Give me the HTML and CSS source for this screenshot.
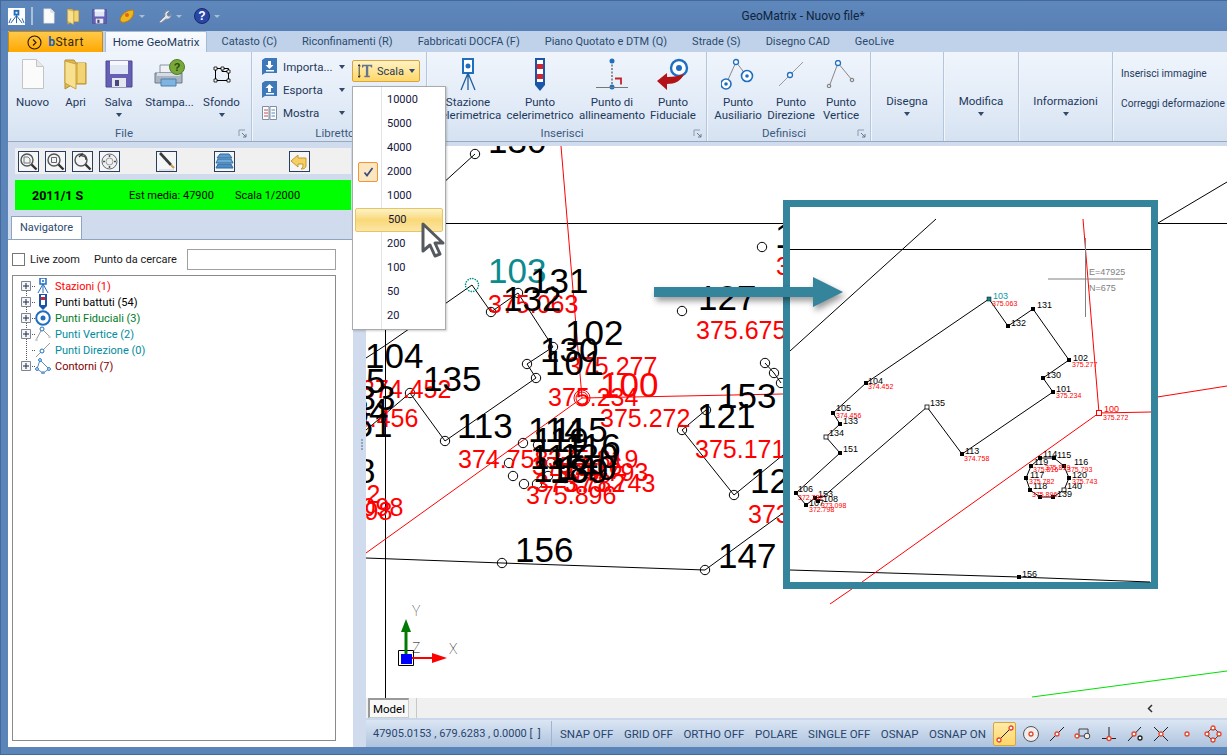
FILE: index.html
```html
<!DOCTYPE html>
<html>
<head>
<meta charset="UTF-8">
<title>GeoMatrix - Nuovo file*</title>
<link rel="stylesheet" href="styles.css">
</head>
<body>

<!-- shared icons -->
<svg class="defs" width="0" height="0">
  <symbol id="i-doc" viewBox="0 0 24 32">
    <path d="M1.5 1.5h14l7 7v22h-21z" fill="#fbfbfb" stroke="#c4c4c4"/>
    <path d="M15.5 1.5v7h7" fill="#e8e8e8" stroke="#c4c4c4"/>
  </symbol>
  <symbol id="i-folder" viewBox="0 0 24 32">
    <path d="M1 2h9l2 3h10v21H9l-8 5z" fill="#e2b94f" stroke="#b58d2e"/>
    <path d="M1 3l11 3v25l-11-6z" fill="#f7e08f" stroke="#c9a23c"/>
    <path d="M14 5h7v20h-7z" fill="#f3d474"/>
  </symbol>
  <symbol id="i-floppy" viewBox="0 0 28 28">
    <path d="M1 1h26v26H1z" fill="#6560b4" stroke="#4a4690"/>
    <path d="M5 1h18v13H5z" fill="#dfe6f6"/>
    <path d="M5 1h18v4H5z" fill="#f6f8fd"/>
    <path d="M7 18h14v9H7z" fill="#e6e6ee"/>
    <path d="M10 20h4v6h-4z" fill="#4a4a78"/>
  </symbol>
  <symbol id="i-plus" viewBox="0 0 10 10">
    <path d="M.5.5h9v9h-9z" fill="#f4f6fa" stroke="#7d8590"/>
    <path d="M2 5h6M5 2v6" stroke="#1d2a45"/>
  </symbol>
  <symbol id="i-launch" viewBox="0 0 9 9">
    <path d="M1 1h6M1 1v6" stroke="#8a9bb0" fill="none"/>
    <path d="M4 4l4 4M8 5v3H5" stroke="#66788e" fill="none"/>
  </symbol>
  <symbol id="i-mag" viewBox="0 0 19 19">
    <circle cx="8" cy="8" r="6" fill="#f2f4f6" stroke="#555" stroke-width="1.4"/>
    <path d="M12.5 12.5l5 5" stroke="#333" stroke-width="2.4"/>
  </symbol>
</svg>

<div class="app">

  <header class="titlebar">
    <div class="qat">
      <svg width="17" height="17" viewBox="0 0 18 18">
        <path d="M0 0h18v18H0z" fill="#fff"/>
        <path d="M6 2h6v6H6z" fill="#1f6fc0"/>
        <path d="M8 4h2v2H8z" fill="#fff"/>
        <path d="M9 8L3 16M9 8v8M9 8l6 8M3 11l-2 5M15 11l2 5" stroke="#1f5fa8" fill="none"/>
      </svg>
      <span class="q-sep"></span>
      <svg width="12" height="16"><use href="#i-doc"/></svg>
      <svg width="13" height="17"><use href="#i-folder"/></svg>
      <svg width="15" height="15"><use href="#i-floppy"/></svg>
      <svg width="16" height="15" viewBox="0 0 16 15">
        <path d="M1 11C2 5 8 1 14 1c2 3-1 9-5 11-4 2-7 2-8-1z" fill="#f0b61e" stroke="#b57f0c"/>
        <circle cx="8" cy="6" r="2" fill="#e0661a"/>
      </svg>
      <span class="q-arrow"></span>
      <svg width="15" height="15" viewBox="0 0 15 15">
        <path d="M2 13L8 7c-1-3 1-6 5-5l-3 3 1 2 2 0 1-2c1 3-2 6-5 5l-5 4z" fill="#dfe5ee" stroke="#7d8794"/>
      </svg>
      <span class="q-arrow"></span>
      <svg width="16" height="16" viewBox="0 0 16 16">
        <circle cx="8" cy="8" r="7.500" fill="#2a47a8" stroke="#18296b"/>
        <text x="8" y="12" class="q-help">?</text>
      </svg>
      <span class="q-arrow"></span>
    </div>
    <div class="title">GeoMatrix - Nuovo file*</div>
  </header>

  <nav class="tabs">
    <div class="bstart">
      <svg width="15" height="15" viewBox="0 0 15 15">
        <circle cx="7.500" cy="7.500" r="6.500" fill="none" stroke="#2a1a00" stroke-width="1.100"/>
        <path d="M6 4.500l3 3-3 3" fill="none" stroke="#2a1a00" stroke-width="1.100"/>
      </svg>
      <span><b class="bstart-b">b</b>Start</span>
    </div>
    <div class="tab active">Home GeoMatrix</div>
    <div class="tab first">Catasto (C)</div>
    <div class="tab">Riconfinamenti (R)</div>
    <div class="tab">Fabbricati DOCFA (F)</div>
    <div class="tab">Piano Quotato e DTM (Q)</div>
    <div class="tab">Strade (S)</div>
    <div class="tab">Disegno CAD</div>
    <div class="tab">GeoLive</div>
  </nav>

  <section class="ribbon">

    <div class="group g-file">
      <div class="group-body cols">
        <div class="big"><div class="big-ico"><svg width="24" height="32"><use href="#i-doc"/></svg></div><span>Nuovo</span></div>
        <div class="big"><div class="big-ico"><svg width="24" height="32"><use href="#i-folder"/></svg></div><span>Apri</span></div>
        <div class="big"><div class="big-ico"><svg width="28" height="28"><use href="#i-floppy"/></svg></div><span>Salva</span><i class="caret"></i></div>
        <div class="big"><div class="big-ico">
          <svg width="31" height="30" viewBox="0 0 31 30">
            <path d="M6 6h17v8H6z" fill="#eef1f5" stroke="#8b96a3"/>
            <path d="M1 14h27v10H1z" fill="#a9b5c2" stroke="#6d7a88"/>
            <path d="M3 14h23v3H3z" fill="#d5dce4"/>
            <path d="M7 20h15v7H7z" fill="#7fb4e0" stroke="#4f7ea8"/>
            <circle cx="23" cy="8" r="7.500" fill="#79a83a" stroke="#557a22"/>
            <text x="23" y="12" class="p-help">?</text>
          </svg></div><span>Stampa...</span></div>
        <div class="big"><div class="big-ico">
          <svg width="18" height="17" viewBox="0 0 18 17">
            <path d="M2.500 2.500h13v12h-13z" fill="none" stroke="#000"/>
            <path d="M9 2.500v3h6.500" fill="none" stroke="#000"/>
            <path d="M1 1h3v3H1zM8 1h3v3H8zM14 4h3v3h-3zM14 13h3v3h-3zM1 13h3v3H1z" fill="#fff" stroke="#000" stroke-width=".8"/>
          </svg></div><span>Sfondo</span><i class="caret"></i></div>
      </div>
      <div class="group-label"><span>File</span><svg width="9" height="9"><use href="#i-launch"/></svg></div>
    </div>

    <div class="group g-lib">
      <div class="group-body lib-body">
        <div class="small-col">
          <div class="small">
            <svg width="15" height="17" viewBox="0 0 15 17"><path d="M0 2l3-2h12v15H3l-3 2z" fill="#3d78b8"/><path d="M6 3h3v4h2.500l-4 4-4-4H6z" fill="#fff"/><path d="M4 12h8v1.500H4z" fill="#fff"/></svg>
            <span>Importa...</span><i class="caret"></i>
          </div>
          <div class="small">
            <svg width="15" height="17" viewBox="0 0 15 17"><path d="M0 2l3-2h12v15H3l-3 2z" fill="#3d78b8"/><path d="M6 11h3V7h2.500l-4-4-4 4H6z" fill="#fff"/><path d="M4 12h8v1.500H4z" fill="#fff"/></svg>
            <span>Esporta</span><i class="caret"></i>
          </div>
          <div class="small">
            <svg width="15" height="14" viewBox="0 0 15 14"><path d="M.5.500h6.500v13H.5zM8 .500h6.500v13H8z" fill="#fdfdfd" stroke="#7f8ea3"/><path d="M2 4h4M2 7h4M2 10h4" stroke="#c0504d"/><path d="M9.500 4h3.500M9.500 7h3.500M9.500 10h3.500" stroke="#5b87bd"/></svg>
            <span>Mostra</span><i class="caret"></i>
          </div>
        </div>
        <div class="scala">
          <svg width="15" height="16" viewBox="0 0 19 18">
            <path d="M1.500 1v16M0 3l1.500-2L3 3M0 15l1.500 2L3 15" stroke="#111" fill="none"/>
            <path d="M5 1h13v4h-1c0-1-1-2-2-2h-2v12h2v2H8v-2h2V3H8C7 3 6 4 6 5H5z" fill="#65758b"/>
          </svg>
          <span>Scala</span><i class="caret"></i>
        </div>
      </div>
      <div class="group-label"><span>Libretto</span><svg width="9" height="9"><use href="#i-launch"/></svg></div>
    </div>

    <div class="group g-ins">
      <div class="group-body cols">
        <div class="big"><div class="big-ico">
          <svg width="20" height="33" viewBox="0 0 20 33">
            <path d="M5 1h10v14H5z" fill="#fff" stroke="#1f6fc0" stroke-width="2"/>
            <circle cx="10" cy="8" r="2.500" fill="#1f6fc0"/>
            <path d="M10 15L3 32M10 15v17M10 15l7 17" stroke="#1f5f9f" stroke-width="1.300" fill="none"/>
          </svg></div><span>Stazione<br>celerimetrica</span></div>
        <div class="big"><div class="big-ico">
          <svg width="12" height="33" viewBox="0 0 12 33">
            <path d="M1 0h10v27l-5 6-5-6z" fill="#1b55a8"/>
            <path d="M3 2h6v22H3z" fill="#fff"/>
            <path d="M3 6h6v5H3zM3 16h6v5H3z" fill="#d8232a"/>
          </svg></div><span>Punto<br>celerimetrico</span></div>
        <div class="big"><div class="big-ico">
          <svg width="34" height="33" viewBox="0 0 34 33">
            <path d="M17 3v26" stroke="#333" stroke-dasharray="2 1.500"/>
            <circle cx="17" cy="3" r="2.500" fill="#1f6fc0"/>
            <circle cx="17" cy="29" r="2.500" fill="#1f6fc0"/>
            <path d="M1 29.500h32" stroke="#777"/>
            <path d="M20 20.500h6v6" fill="none" stroke="#c8202a" stroke-width="1.800"/>
          </svg></div><span>Punto di<br>allineamento</span></div>
        <div class="big"><div class="big-ico">
          <svg width="34" height="33" viewBox="0 0 34 33">
            <circle cx="23" cy="10" r="8" fill="#fff" stroke="#1f6fc0" stroke-width="2.400"/>
            <circle cx="23" cy="10" r="3" fill="#1f6fc0"/>
            <path d="M1 23l10-8v4c7 0 12-1 17-3-3 7-9 10-17 10v6z" fill="#b31217"/>
          </svg></div><span>Punto<br>Fiduciale</span></div>
      </div>
      <div class="group-label"><span>Inserisci</span><svg width="9" height="9"><use href="#i-launch"/></svg></div>
    </div>

    <div class="group g-def">
      <div class="group-body cols">
        <div class="big"><div class="big-ico">
          <svg width="34" height="32" viewBox="0 0 34 32">
            <path d="M6 24l9-20 10 13" fill="none" stroke="#888"/>
            <circle cx="15" cy="4" r="2.500" fill="#fff" stroke="#1f6fc0" stroke-width="1.300"/>
            <circle cx="26" cy="18" r="5.500" fill="#fff" stroke="#1f6fc0" stroke-width="1.600"/>
            <circle cx="26" cy="18" r="1.800" fill="#1f6fc0"/>
            <circle cx="5" cy="26" r="5" fill="#fff" stroke="#1f6fc0" stroke-width="1.600"/>
            <circle cx="5" cy="26" r="1.800" fill="#1f6fc0"/>
          </svg></div><span>Punto<br>Ausiliario</span></div>
        <div class="big"><div class="big-ico">
          <svg width="26" height="26" viewBox="0 0 26 26">
            <path d="M1 25L25 1" stroke="#999"/>
            <circle cx="12" cy="14" r="2.500" fill="#fff" stroke="#1f6fc0" stroke-width="1.300"/>
          </svg></div><span>Punto<br>Direzione</span></div>
        <div class="big"><div class="big-ico">
          <svg width="30" height="28" viewBox="0 0 30 28">
            <path d="M3 27L12 3l14 17" fill="none" stroke="#888"/>
            <circle cx="12" cy="3" r="2.500" fill="#fff" stroke="#1f6fc0" stroke-width="1.300"/>
            <circle cx="26" cy="20" r="1.800" fill="#ddd" stroke="#777"/>
            <circle cx="3" cy="26" r="1.800" fill="#ddd" stroke="#777"/>
          </svg></div><span>Punto<br>Vertice</span></div>
      </div>
      <div class="group-label"><span>Definisci</span><svg width="9" height="9"><use href="#i-launch"/></svg></div>
    </div>

    <div class="group g-dis"><div class="group-body"><div class="big wide"><span>Disegna</span><i class="caret"></i></div></div></div>
    <div class="group g-mod"><div class="group-body"><div class="big wide"><span>Modifica</span><i class="caret"></i></div></div></div>
    <div class="group g-inf"><div class="group-body"><div class="big wide"><span>Informazioni</span><i class="caret"></i></div></div></div>
    <div class="group g-img">
      <div class="img-row">Inserisci immagine</div>
      <div class="img-row">Correggi deformazione</div>
    </div>
  </section>

  <div class="work">
    <aside class="side">
      <div class="tools">
        <div class="tool"><svg width="19" height="19"><use href="#i-mag"/><path d="M5 5h4l2 2v4H5z" fill="none" stroke="#777"/></svg></div>
        <div class="tool"><svg width="19" height="19"><use href="#i-mag"/><path d="M5.500 5.500h5v5h-5z" fill="none" stroke="#666"/></svg></div>
        <div class="tool"><svg width="19" height="19"><use href="#i-mag"/><path d="M6 5l3-3v2c3 0 4 2 4 4" fill="none" stroke="#333" stroke-width="1.200"/></svg></div>
        <div class="tool"><svg width="19" height="19" viewBox="0 0 19 19"><circle cx="9.500" cy="9.500" r="7.500" fill="#eef0f3" stroke="#666"/><circle cx="9.500" cy="9.500" r="3.500" fill="none" stroke="#999"/><path d="M9.500 3v2M9.500 14v2M3 9.500h2M14 9.500h2" stroke="#555" stroke-width="1.500"/></svg></div>
        <div class="tool t-pen"><svg width="19" height="19" viewBox="0 0 19 19"><path d="M3 1l11 12" stroke="#3a3a3a" stroke-width="2.600"/><path d="M14 13l3 3" stroke="#c99a4a" stroke-width="2"/><path d="M2 18h15" stroke="#c9ccd0"/></svg></div>
        <div class="tool t-layer"><svg width="19" height="19" viewBox="0 0 19 19"><path d="M5 2h9l3 4H2z" fill="#5f9bd0" stroke="#2f6aa0"/><path d="M3 7h13l2 4H1z" fill="#6fa8da" stroke="#2f6aa0"/><path d="M3 12h13l2 4H1z" fill="#4f8cc4" stroke="#2f6aa0"/></svg></div>
        <div class="tool t-back"><svg width="19" height="19" viewBox="0 0 19 19"><path d="M1 9l7-6v3h8v8c0 2-2 3-5 3 2-1 2-3 2-5H8v3z" fill="#f5cf66" stroke="#c79a2a"/></svg></div>
      </div>

      <div class="status-green">
        <b class="g-id">2011/1 S</b>
        <span class="g-est">Est media: 47900</span>
        <span class="g-sc">Scala 1/2000</span>
      </div>

      <div class="nav-tabs"><div class="nav-tab">Navigatore</div></div>
      <div class="nav-panel">
        <div class="search-row">
          <span class="chk"></span>
          <span class="lz">Live zoom</span>
          <span class="pc">Punto da cercare</span>
          <input class="search" type="text">
        </div>
        <div class="tree">
          <div class="row r-red"><svg class="exp" width="10" height="10"><use href="#i-plus"/></svg><i class="dots"></i>
            <svg class="t-ico" width="16" height="16" viewBox="0 0 16 16"><path d="M5 0h6v6H5z" fill="#fff" stroke="#1f6fc0" stroke-width="1.500"/><circle cx="8" cy="3" r="1" fill="#1f6fc0"/><path d="M8 6l-5 9M8 6v9M8 6l5 9" stroke="#1f6fc0" fill="none"/></svg>
            <span>Stazioni (1)</span></div>
          <div class="row r-blk"><svg class="exp" width="10" height="10"><use href="#i-plus"/></svg><i class="dots"></i>
            <svg class="t-ico" width="16" height="16" viewBox="0 0 16 16"><path d="M4 0h8v12l-4 4-4-4z" fill="#1b55a8"/><path d="M6 1h4v10H6z" fill="#fff"/><path d="M6 3h4v3H6z" fill="#d8232a"/></svg>
            <span>Punti battuti (54)</span></div>
          <div class="row r-grn"><svg class="exp" width="10" height="10"><use href="#i-plus"/></svg><i class="dots"></i>
            <svg class="t-ico" width="16" height="16" viewBox="0 0 16 16"><circle cx="8" cy="8" r="6.800" fill="#fff" stroke="#1f6fc0" stroke-width="2"/><circle cx="8" cy="8" r="2.500" fill="#1f6fc0"/></svg>
            <span>Punti Fiduciali (3)</span></div>
          <div class="row r-teal"><svg class="exp" width="10" height="10"><use href="#i-plus"/></svg><i class="dots"></i>
            <svg class="t-ico" width="16" height="16" viewBox="0 0 16 16"><path d="M1 14L7 3l8 8" fill="none" stroke="#999"/><circle cx="7" cy="3" r="2" fill="#fff" stroke="#1f6fc0"/><circle cx="1.500" cy="14" r="1.300" fill="#ccc"/><circle cx="14.500" cy="11" r="1.300" fill="#ccc"/></svg>
            <span>Punti Vertice (2)</span></div>
          <div class="row r-teal"><span class="exp-blank"></span><i class="dots"></i>
            <svg class="t-ico" width="16" height="16" viewBox="0 0 16 16"><path d="M1 15L15 1" stroke="#999"/><circle cx="7" cy="9" r="2" fill="#fff" stroke="#1f6fc0"/></svg>
            <span>Punti Direzione (0)</span></div>
          <div class="row r-mar"><svg class="exp" width="10" height="10"><use href="#i-plus"/></svg><i class="dots"></i>
            <svg class="t-ico" width="16" height="16" viewBox="0 0 16 16"><path d="M2 11L5 2l9 9-6 4z" fill="none" stroke="#5b87bd"/><circle cx="5" cy="2" r="1.400" fill="#fff" stroke="#1f6fc0"/><circle cx="14" cy="11" r="1.400" fill="#fff" stroke="#1f6fc0"/><circle cx="2" cy="11" r="1.400" fill="#fff" stroke="#1f6fc0"/><circle cx="8" cy="15" r="1.200" fill="#fff" stroke="#1f6fc0"/></svg>
            <span>Contorni (7)</span></div>
        </div>
      </div>
    </aside>

    <div class="splitter"><i></i><i></i><i></i><i></i></div>

    <div class="right">
      <svg class="cad" width="861" height="552" viewBox="366 146 861 552">
        <!-- base drawing -->
        <g class="ln-k">
          <path d="M366 223.500H1227"/>
          <path d="M385.500 146V698"/>
          <path d="M475 154L385 236"/>
          <path d="M472 285L386 345 366 358"/>
          <path d="M472 285L491 312 518 293 553 347 527 364 536 378 445 441 410 393 366 430"/>
          <path d="M366 558L502 563 705 570 783 513"/>
          <path d="M682 430L706 410M682 430L734 495 783 455"/>
          <path d="M765 363L774 373 781 383"/>
          <path d="M1158 223L1227 182"/>
        </g>
        <g class="ln-r">
          <path d="M561 146L582 398"/>
          <path d="M582 398L366 553"/>
          <path d="M582 398L783 394"/>
          <path d="M1151 398L1227 386"/>
          <path d="M862 582L830 604"/>
        </g>
        <path class="ln-g" d="M1032 697L1227 671"/>
        <g class="pt">
          <circle cx="475" cy="154" r="4.700"/><circle cx="491" cy="312" r="4.700"/><circle cx="518" cy="293" r="4.700"/>
          <circle cx="553" cy="347" r="4.700"/><circle cx="527" cy="364" r="4.700"/><circle cx="536" cy="378" r="4.700"/>
          <circle cx="445" cy="441" r="4.700"/><circle cx="410" cy="393" r="4.700"/><circle cx="682" cy="311" r="4.700"/>
          <circle cx="762" cy="247" r="4.700"/><circle cx="765" cy="363" r="4.700"/><circle cx="774" cy="373" r="4.700"/>
          <circle cx="781" cy="383" r="4.700"/><circle cx="682" cy="430" r="4.700"/><circle cx="706" cy="410" r="4.700"/>
          <circle cx="734" cy="495" r="4.700"/><circle cx="502" cy="563" r="4.700"/><circle cx="705" cy="570" r="4.700"/>
          <circle cx="523" cy="443" r="4.700"/><circle cx="538" cy="445" r="4.700"/><circle cx="509" cy="463" r="4.700"/>
          <circle cx="513" cy="476" r="4.700"/><circle cx="524" cy="484" r="4.700"/><circle cx="537" cy="484" r="4.700"/>
          <circle cx="548" cy="476" r="4.700"/><circle cx="551" cy="463" r="4.700"/>
        </g>
        <circle class="pt-teal" cx="472" cy="285" r="6.500"/>
        <circle class="pt-red" cx="582" cy="398" r="8"/>
        <circle class="pt-red" cx="582" cy="398" r="6"/>

        <text class="lbl-teal" x="488" y="283">103</text>
        <g class="elev">
          <text x="488" y="313">375.063</text><text x="696" y="339">375.675</text><text x="567" y="375">375.277</text>
          <text x="548" y="406">375.234</text><text x="600" y="427">375.272</text><text x="361" y="398">374.452</text>
          <text x="328" y="427">374.456</text><text x="458" y="468">374.758</text><text x="695" y="458">375.171</text>
          <text x="526" y="504">375.896</text><text x="565" y="492">375.743</text><text x="558" y="481">375.793</text>
          <text x="548" y="468">375.819</text><text x="532" y="475">375.816</text><text x="535" y="492">375.782</text>
          <text x="313" y="516">373.098</text><text x="302" y="520">372.798</text><text x="290" y="503">372.732</text>
          <text x="748" y="523">373.120</text><text x="776" y="275">375.480</text>
        </g>
        <text class="elev-big" x="600" y="397">100</text>
        <g class="lbl">
          <text x="488" y="153">130</text>
          <text x="530" y="293">131</text><text x="503" y="311">132</text><text x="565" y="345">102</text>
          <text x="540" y="362">130</text><text x="545" y="375">101</text><text x="365" y="368">104</text>
          <text x="423" y="391">135</text><text x="327" y="393">105</text><text x="337" y="410">133</text>
          <text x="330" y="423">134</text><text x="334" y="437">151</text><text x="457" y="438">113</text>
          <text x="317" y="483">108</text>
          <text x="528" y="442">114</text><text x="552" y="442">115</text><text x="533" y="452">119</text>
          <text x="565" y="458">116</text><text x="530" y="469">117</text><text x="533" y="482">118</text>
          <text x="560" y="468">120</text><text x="558" y="480">140</text><text x="550" y="483">139</text>
          <text x="697" y="428">121</text><text x="718" y="408">153</text><text x="698" y="310">127</text>
          <text x="750" y="493">125</text><text x="515" y="562">156</text><text x="718" y="568">147</text>
          <text x="775" y="248">128</text>
        </g>

        <!-- UCS icon -->
        <path class="ln-k" d="M398.500 650.500h15v15h-15z"/>
        <rect x="401" y="654" width="11" height="10" fill="#0000ff"/>
        <path d="M406 654V630" stroke="#007a00" stroke-width="3"/>
        <path d="M401 632l5-13 5 13z" fill="#007a00"/>
        <path d="M412 658h26" stroke="#ff0000" stroke-width="2"/>
        <path d="M432 653l15 5-15 5z" fill="#ff0000"/>
        <text class="axis" x="412" y="616">Y</text>
        <text class="axis" x="412" y="653">Z</text>
        <text class="axis" x="449" y="654">X</text>

        <!-- zoomed inset -->
        <rect class="inset" x="786.500" y="203.500" width="368" height="382"/>
        <g class="ln-k">
          <path d="M790 249.500H1151" stroke-width="1.200"/>
          <path d="M936 219L790 351"/>
          <path d="M989 299L866 383 833 413 840 424 826 437 840 453 796 493 806 505 815 498 823 497 927 407 962 454 1053 392 1043 378 1069 360 1033 309 1008 326z"/>
          <path d="M1040 458H1054L1064 466 1069 478 1064 490 1053 497H1040L1030 490 1026 478 1031 466z"/>
          <path d="M790 570L1019 577 1150 582"/>
        </g>
        <g class="ln-r">
          <path d="M1083 219L1099 413 1151 412"/>
          <path d="M1099 413L862 582"/>
        </g>
        <path class="ln-grey" d="M1048 279H1123M1085.500 238V317"/>
        <text class="cross" x="1089" y="275">E=47925</text>
        <text class="cross" x="1089" y="291">N=675</text>
        <g class="dot">
          <rect x="864" y="381" width="4" height="4"/><rect x="831" y="411" width="4" height="4"/><rect x="838" y="422" width="4" height="4"/>
          <rect x="838" y="451" width="4" height="4"/><rect x="794" y="491" width="4" height="4"/><rect x="804" y="503" width="4" height="4"/>
          <rect x="813" y="496" width="4" height="4"/><rect x="816" y="499" width="4" height="4"/><rect x="960" y="452" width="4" height="4"/>
          <rect x="1051" y="390" width="4" height="4"/><rect x="1041" y="376" width="4" height="4"/><rect x="1067" y="358" width="4" height="4"/>
          <rect x="1031" y="307" width="4" height="4"/><rect x="1006" y="324" width="4" height="4"/><rect x="1017" y="575" width="4" height="4"/>
          <rect x="1038" y="456" width="4" height="4"/><rect x="1052" y="456" width="4" height="4"/><rect x="1062" y="464" width="4" height="4"/>
          <rect x="1067" y="476" width="4" height="4"/><rect x="1051" y="495" width="4" height="4"/><rect x="1038" y="495" width="4" height="4"/>
          <rect x="1028" y="488" width="4" height="4"/><rect x="1024" y="476" width="4" height="4"/><rect x="1029" y="464" width="4" height="4"/>
        </g>
        <rect class="dot-open" x="925" y="405" width="4" height="4"/>
        <rect class="dot-open" x="824" y="435" width="4" height="4"/>
        <rect class="dot-open" x="1062" y="488" width="4" height="4"/>
        <rect class="dot-teal" x="987" y="297" width="4" height="4"/>
        <rect class="dot-red" x="1096.500" y="410.500" width="5" height="5"/>
        <g class="in-lbl">
          <text x="1037" y="308">131</text><text x="1011" y="326">132</text><text x="1073" y="361">102</text>
          <text x="1046" y="378">130</text><text x="1056" y="392">101</text><text x="868" y="384">104</text>
          <text x="836" y="411">105</text><text x="843" y="424">133</text><text x="829" y="436">134</text>
          <text x="843" y="452">151</text><text x="930" y="406">135</text><text x="965" y="454">113</text>
          <text x="798" y="492">106</text><text x="818" y="497">153</text><text x="823" y="502">108</text>
          <text x="809" y="506">107</text><text x="1043" y="457">114</text><text x="1057" y="458">115</text>
          <text x="1034" y="465">119</text><text x="1074" y="465">116</text><text x="1030" y="478">117</text>
          <text x="1072" y="478">120</text><text x="1033" y="489">118</text><text x="1067" y="489">140</text>
          <text x="1057" y="497">139</text><text x="1022" y="577">156</text>
        </g>
        <text class="in-teal" x="993" y="299">103</text>
        <text class="in-red-lbl" x="1104" y="412">100</text>
        <g class="in-elev">
          <text x="992" y="306">375.063</text><text x="1072" y="367">375.277</text><text x="1056" y="398">375.234</text>
          <text x="868" y="389">374.452</text><text x="836" y="418">374.456</text><text x="964" y="461">374.758</text>
          <text x="1103" y="420">375.272</text><text x="798" y="500">372.732</text><text x="821" y="508">373.098</text>
          <text x="809" y="512">372.798</text><text x="1067" y="472">375.793</text><text x="1033" y="472">375.816</text>
          <text x="1072" y="484">375.743</text><text x="1029" y="484">375.782</text><text x="1032" y="497">375.896</text>
          <text x="1045" y="470">375.819</text>
        </g>
        <polygon class="arrow" points="654,287 813,287 813,277 843,292 813,307 813,297 654,297"/>
      </svg>

      <div class="model-bar">
        <div class="model-tab">Model</div>
        <span class="model-sep"></span>
        <svg class="chev" width="6" height="9" viewBox="0 0 6 9"><path d="M5 1L1.500 4.500 5 8" fill="none" stroke="#333" stroke-width="1.500"/></svg>
      </div>

      <footer class="statusbar">
        <div class="coords">47905.0153 , 679.6283 , 0.0000 [ &nbsp;]</div>
        <div class="flags">
          <span>SNAP OFF</span><span>GRID OFF</span><span>ORTHO OFF</span><span>POLARE</span><span>SINGLE OFF</span><span>OSNAP</span><span>OSNAP ON</span>
        </div>
        <div class="snaps">
          <div class="snap on"><svg width="20" height="20" viewBox="0 0 20 20"><path d="M4 16L16 4" stroke="#222"/><circle cx="4" cy="16" r="2" fill="#fff" stroke="#e8442a" stroke-width="1.300"/><circle cx="16" cy="4" r="2" fill="#fff" stroke="#e8442a" stroke-width="1.300"/></svg></div>
          <div class="snap"><svg width="20" height="20" viewBox="0 0 20 20"><circle cx="10" cy="10" r="7.500" fill="#eee" stroke="#555"/><circle cx="10" cy="10" r="2" fill="#fff" stroke="#e8442a" stroke-width="1.300"/></svg></div>
          <div class="snap"><svg width="20" height="20" viewBox="0 0 20 20"><path d="M3 17L17 3" stroke="#222"/><circle cx="10" cy="10" r="2" fill="#fff" stroke="#e8442a" stroke-width="1.300"/></svg></div>
          <div class="snap"><svg width="20" height="20" viewBox="0 0 20 20"><path d="M6 12V5h9v6M6 12h6" fill="none" stroke="#444"/><circle cx="14" cy="12" r="2.800" fill="#eee" stroke="#444"/><circle cx="4" cy="12" r="2" fill="#fff" stroke="#e8442a" stroke-width="1.300"/></svg></div>
          <div class="snap"><svg width="20" height="20" viewBox="0 0 20 20"><path d="M10 3v11M3 14.500h14" stroke="#222"/><circle cx="10" cy="14.500" r="2" fill="#fff" stroke="#e8442a" stroke-width="1.300"/></svg></div>
          <div class="snap"><svg width="20" height="20" viewBox="0 0 20 20"><path d="M3 17L16 3" stroke="#222"/><circle cx="9" cy="10" r="2" fill="#fff" stroke="#e8442a" stroke-width="1.300"/><circle cx="15" cy="14" r="2" fill="#fff" stroke="#222" stroke-width="1.300"/></svg></div>
          <div class="snap"><svg width="20" height="20" viewBox="0 0 20 20"><path d="M3 3l14 14M17 3L3 17" stroke="#222"/><circle cx="10" cy="10" r="2" fill="#fff" stroke="#e8442a" stroke-width="1.300"/></svg></div>
          <div class="snap"><svg width="20" height="20" viewBox="0 0 20 20"><circle cx="10" cy="10" r="2" fill="#fff" stroke="#e8442a" stroke-width="1.300"/></svg></div>
          <div class="snap"><svg width="20" height="20" viewBox="0 0 20 20"><path d="M10 3L17 10 10 17 3 10z" fill="none" stroke="#444"/><circle cx="10" cy="4" r="2" fill="#fff" stroke="#e8442a" stroke-width="1.300"/><circle cx="16" cy="10" r="2" fill="#fff" stroke="#e8442a" stroke-width="1.300"/><circle cx="10" cy="16" r="2" fill="#fff" stroke="#e8442a" stroke-width="1.300"/><circle cx="4" cy="10" r="2" fill="#fff" stroke="#e8442a" stroke-width="1.300"/></svg></div>
        </div>
      </footer>
    </div>
  </div>

  <div class="bottom-edge"></div>

  <!-- open Scala menu -->
  <div class="menu">
    <div class="menu-item">10000</div>
    <div class="menu-item">5000</div>
    <div class="menu-item">4000</div>
    <div class="menu-item checked"><span class="check"><svg width="11" height="10" viewBox="0 0 11 10"><path d="M1.500 5.500L4 8.500 9.500 1" fill="none" stroke="#3a4a78" stroke-width="1.700"/></svg></span>2000</div>
    <div class="menu-item">1000</div>
    <div class="menu-item hot">500</div>
    <div class="menu-item">200</div>
    <div class="menu-item">100</div>
    <div class="menu-item">50</div>
    <div class="menu-item">20</div>
  </div>
  <svg class="cursor" width="24" height="36" viewBox="0 0 24 36">
    <path d="M2 2v27l7-6 5 11 5-2-5-11h8z" fill="#fff" stroke="#565a5e" stroke-width="3" stroke-linejoin="round"/>
  </svg>
</div>

</body>
</html>
```

FILE: styles.css
```css
* { box-sizing: border-box; }

html, body { margin: 0; padding: 0; }

body { font-family: Roboto, "Noto Sans", sans-serif; font-size: 11.5px; color: #1e395b; background: #5b85b9; }

.defs { position: absolute; }

.app { position: relative; width: 1227px; height: 755px; overflow: hidden; display: flex; flex-direction: column; background: #5b85b9; border-left: 1px solid #44699a; }

/* title bar */
.titlebar { height: 31px; display: flex; align-items: center; border-top: 1px solid #44699a; margin-left: -1px; background: linear-gradient(#5e88bc, #5980b4); }
.qat { width: 379px; display: flex; align-items: center; gap: 12px; padding-left: 8px; }
.q-sep { width: 2px; height: 18px; background: #a9c0dc; margin: 0 -2px 0 -6px; }
.q-arrow { width: 6px; height: 0; border: 3px solid transparent; border-top: 3px solid #a9bdd6; border-bottom: 0; margin-left: -8px; }
.q-help { font: bold 12px "Liberation Sans", sans-serif; fill: #fff; text-anchor: middle; }
.p-help { font: bold 11px "Liberation Sans", sans-serif; fill: #2a4a10; text-anchor: middle; }
.title { flex: 1; text-align: center; font-size: 12px; color: #10243c; }

/* tabs */
.tabs { height: 21px; display: flex; align-items: stretch; margin-left: 7px; background: #bfd2e9; font-size: 11px; }
.bstart { width: 95px; display: flex; align-items: center; justify-content: center; gap: 6px; font-size: 12px; letter-spacing: .5px; color: #33270a; border: 1px solid #c98a10; border-bottom: 0; border-radius: 2px 2px 0 0; background: linear-gradient(#ffc94a, #ffa800); }
.bstart-b { color: #1a5fb4; }
.tab { padding: 0 12.5px; line-height: 21px; white-space: nowrap; color: #2b4a70; }
.tab.active { margin-left: 2px; padding: 0; width: 102px; text-align: center; font-size: 11.5px; color: #1e395b; border: 1px solid #a5bad4; border-bottom: 0; border-radius: 2px 2px 0 0; background: linear-gradient(#f8fbfe, #edf3fb); }
.tab.first { margin-left: 2px; }

/* ribbon */
.ribbon { height: 90px; display: flex; margin-left: 7px; background: linear-gradient(#f0f5fc, #dfe9f6 70%, #d6e2f1); border-bottom: 1px solid #93a9c4; }
.group { display: flex; flex-direction: column; border-right: 1px solid #b4c6dc; box-shadow: 1px 0 0 #f2f6fb; }
.group-body { flex: 1; padding-top: 4px; }
.group-label { height: 16px; display: flex; align-items: center; padding-right: 4px; color: #3d5a80; }
.group-label span { flex: 1; text-align: center; padding-left: 6px; }
.group-label svg { margin-left: 7px; }
.cols { display: grid; }

.g-file { width: 244px; padding-left: 3px; }
.g-file .cols { grid-template-columns: 43px 43px 43px 59px 45px; }
.g-lib { width: 175px; padding-left: 6px; }
.g-ins { width: 280px; padding-left: 5px; }
.g-ins .cols { grid-template-columns: 72px 72px 72px 50px; }
.g-def { width: 164px; padding-left: 5px; }
.g-def .cols { grid-template-columns: 52px 54px 46px; }
.g-dis { width: 73px; }
.g-mod { width: 75px; }
.g-inf { width: 94px; }
.g-img { flex: 1; padding: 14px 0 0 8px; font-size: 10.2px; white-space: nowrap; overflow: hidden; border-right: 0; box-shadow: none; }
.img-row { height: 30px; line-height: 15px; }

.big { display: flex; flex-direction: column; align-items: center; text-align: center; line-height: 13px; white-space: nowrap; }
.big-ico { height: 36px; margin-bottom: 4px; display: flex; align-items: center; justify-content: center; }
.big.wide { padding-top: 39px; }
.caret { display: block; width: 0; height: 0; border: 3px solid transparent; border-top: 4px solid #33496a; border-bottom: 0; }
.big .caret { margin-top: 4px; }

.lib-body { display: flex; align-items: flex-start; }
.small-col { width: 90px; margin-top: -1px; }
.small { height: 23px; display: flex; align-items: center; padding-left: 4px; }
.small svg { width: 15px; margin-right: 6px; }
.small span { flex: 1; }
.small .caret { margin-right: 3px; }
.scala { width: 68px; height: 22px; margin: 4px 0 0 4px; display: flex; align-items: center; gap: 4px; padding-left: 5px; font-size: 11px; border: 1px solid #d9a43e; border-radius: 2px; background: linear-gradient(#fff2c4, #ffd768); }
.scala .caret { margin-left: 1px; }

/* work area */
.work { flex: 1; display: flex; margin-left: 7px; background: #d0dcee; min-height: 0; }
.side { width: 345px; display: flex; flex-direction: column; font-size: 11px; }
.tools { height: 26px; margin: 6px 2px 0 7px; display: flex; align-items: center; gap: 6px; padding-left: 3px; background: #f0f0f0; }
.tool { width: 21px; height: 21px; display: flex; align-items: center; justify-content: center; border: 1px solid #2a3f5f; background: #f5f6f8; }
.t-pen { margin-left: 30px; }
.t-layer { margin-left: 31px; }
.t-back { margin-left: 48px; }
.status-green { height: 30px; margin: 6px 2px 0 7px; display: flex; align-items: center; background: #00ff00; color: #000; }
.g-id { width: 114px; padding-left: 17px; font-size: 12.5px; }
.g-est { width: 106px; }
.nav-tabs { height: 23px; margin-top: 6px; padding-left: 3px; display: flex; }
.nav-tab { width: 71px; text-align: center; line-height: 22px; border: 1px solid #8ea4c0; border-bottom: 0; background: #fff; color: #2b4a70; }
.nav-panel { flex: 1; padding: 9px 17px 6px 4px; display: flex; flex-direction: column; background: #fff; border-top: 1px solid #8ea4c0; }
.search-row { height: 21px; margin-bottom: 5px; display: flex; align-items: center; color: #1a1a1a; white-space: nowrap; }
.chk { width: 13px; height: 13px; flex: none; border: 1px solid #777; margin-right: 5px; }
.lz { width: 64px; flex: none; }
.pc { width: 93px; flex: none; }
.search { flex: 1; min-width: 0; height: 21px; border: 1px solid #a0a0a0; background: #fff; padding: 0; }
.tree { flex: 1; position: relative; padding-top: 2px; border: 1px solid #8a8a8a; }
.tree::before { content: ""; position: absolute; left: 13px; top: 10px; height: 80px; border-left: 1px dotted #555; }
.row { height: 16px; display: flex; align-items: center; position: relative; white-space: nowrap; }
.exp { margin-left: 8px; position: relative; }
.exp-blank { width: 10px; margin-left: 8px; }
.dots { width: 3px; margin-left: 1px; border-top: 1px dotted #555; }
.t-ico { margin-right: 4px; }
.r-red { color: #ff0000; }
.r-blk { color: #000; }
.r-grn { color: #007a1e; }
.r-teal { color: #008b9e; }
.r-mar { color: #800000; }

.splitter { width: 13px; display: flex; flex-direction: column; align-items: center; justify-content: center; gap: 1px; padding-left: 4px; }
.splitter i { width: 2px; height: 2px; background: #8ea4c0; }

.right { flex: 1; display: flex; flex-direction: column; min-width: 0; }
.cad { display: block; margin-top: 4px; background: #fff; font-family: "Liberation Sans", sans-serif; }
.ln-k path, path.ln-k { fill: none; stroke: #000; stroke-width: 1; }
.ln-r path { fill: none; stroke: #ff0000; stroke-width: 1; }
.ln-g { fill: none; stroke: #00e000; }
.ln-grey { fill: none; stroke: #808080; }
.pt circle { fill: none; stroke: #000; }
.pt-teal { fill: none; stroke: #008b8b; stroke-dasharray: 1.500 1; stroke-width: 1.400; }
.pt-red { fill: none; stroke: #ff0000; }
.lbl text { font-size: 35px; fill: #000; }
.lbl-teal { font-size: 35px; fill: #0b8a8f; }
.elev text { font-size: 25px; fill: #ff0000; }
.elev-big { font-size: 35px; fill: #ff0000; }
.axis { font-family: Roboto, sans-serif; font-size: 14px; font-weight: 100; fill: #000; }
.inset { fill: #fff; stroke: #34849c; stroke-width: 7; }
.cross { font-size: 9px; fill: #808080; }
.dot rect { fill: #000; }
.dot-open { fill: #fff; stroke: #000; stroke-width: .8; }
.dot-teal { fill: #0b8a8f; stroke: #000; stroke-width: .5; }
.dot-red { fill: #fff; stroke: #ff0000; }
.in-lbl text { font-size: 9px; fill: #000; }
.in-teal { font-size: 9px; fill: #0b9aa0; }
.in-red-lbl { font-size: 9px; fill: #ff0000; }
.in-elev text { font-size: 7px; fill: #ff0000; }
.arrow { fill: #34849c; filter: drop-shadow(2px 4px 3px rgba(0,0,0,.4)); }

.model-bar { height: 20px; display: flex; align-items: stretch; background: #f0f0f0; padding: 0 74px 0 2px; }
.model-tab { width: 41px; line-height: 18px; text-align: center; color: #000; border: 2px solid #999; border-right: 1px solid #ccc; border-bottom: 1px solid #ccc; background: #f8f8f8; }
.model-sep { width: 1px; margin-left: 7px; background: #c8c8c8; }
.chev { margin: 6px 0 0 auto; }

.statusbar { height: 29px; display: flex; align-items: center; border-top: 2px solid #c9d8ea; background: linear-gradient(#dbe6f4, #aec3de); color: #27456d; white-space: nowrap; font-size: 11.5px; }
.coords { width: 186px; padding-left: 7px; font-size: 11px; border-right: 1px solid #a0b4cd; line-height: 25px; margin-right: 8px; }
.flags { width: 433px; display: flex; gap: 10.5px; }
.snaps { display: flex; gap: 3px; }
.snap { width: 23px; height: 24px; display: flex; align-items: center; justify-content: center; }
.snap.on { border: 1px solid #d9a43e; border-radius: 2px; background: linear-gradient(#ffeaa8, #ffd768); }

.bottom-edge { height: 8px; background: #5b85b9; border-bottom: 1px solid #44699a; margin-left: -1px; }

/* menu over the ribbon */
.menu { position: absolute; left: 351px; top: 86px; width: 94px; height: 244px; padding: 1px; background: #fff; border: 1px solid #a7abb0; box-shadow: 1px 1px 2px rgba(0,0,0,.2); z-index: 3; color: #14143c; font-size: 11px; }
.menu::before { content: ""; position: absolute; left: 28px; top: 0; bottom: 0; border-left: 1px solid #e2e4e7; }
.menu-item { position: relative; height: 24px; line-height: 24px; padding-left: 33px; }
.menu-item.hot { margin: 0 1px; padding-left: 32px; border: 1px solid #e6c664; border-radius: 2px; line-height: 22px; background: linear-gradient(#fdf3c8, #f9d878 50%, #fbe6a5); }
.check { position: absolute; left: 4px; top: 2px; width: 20px; height: 20px; display: flex; align-items: center; justify-content: center; border: 1px solid #f29536; border-radius: 2px; background: #fde6c2; }
.cursor { position: absolute; left: 420px; top: 222px; z-index: 4; }
```
